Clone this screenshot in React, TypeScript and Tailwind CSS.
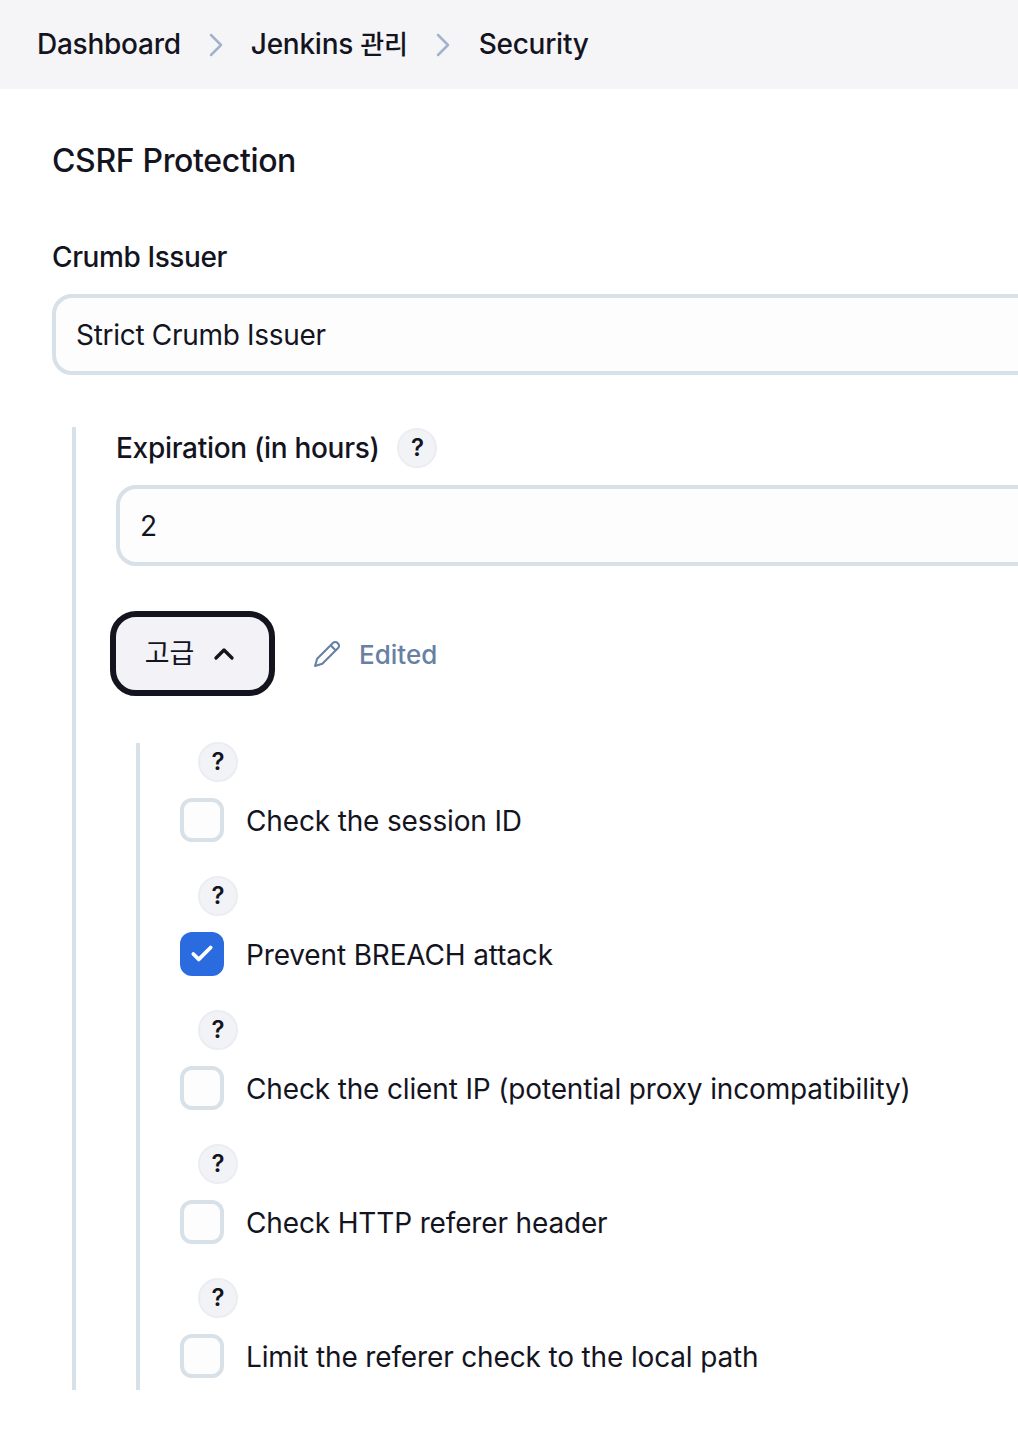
import { Check, ChevronUp } from "lucide-react";

const OPTIONS: { label: string; checked?: boolean }[] = [
  { label: "Check the session ID" },
  { label: "Prevent BREACH attack", checked: true },
  { label: "Check the client IP (potential proxy incompatibility)" },
  { label: "Check HTTP referer header" },
  { label: "Limit the referer check to the local path" },
];

function Separator() {
  return (
    <svg className="mx-7 h-[24px] w-[14px] text-[#a3b2cb]" viewBox="0 0 14 24" fill="none" stroke="currentColor" strokeWidth="2.5" strokeLinecap="round" strokeLinejoin="round">
      <path d="M2 2l10 10L2 22" />
    </svg>
  );
}

function HelpBadge() {
  return (
    <span className="flex h-10 w-10 shrink-0 items-center justify-center rounded-full border-2 border-[#ecedf2] bg-[#f2f3f7] text-[24px] font-semibold leading-none text-[#14141f]">
      ?
    </span>
  );
}

function TextBox({ value }: { value: string }) {
  return (
    <div className="flex h-[81px] w-[1100px] items-center rounded-[20px] border-4 border-[#d8e0e8] bg-[#fdfdfe] pl-5 text-[28px] tracking-[-0.3px]">
      {value}
    </div>
  );
}

function Option({ label, checked }: { label: string; checked?: boolean }) {
  return (
    <div>
      <div className="-mt-px pl-[58px]">
        <HelpBadge />
      </div>
      <div className="mt-[15px] flex items-center gap-[22px] pl-10">
        {checked ? (
          <span className="flex h-11 w-11 items-center justify-center rounded-xl bg-[#2b6be0]">
            <Check className="h-[26px] w-[26px] text-white" strokeWidth={3.5} />
          </span>
        ) : (
          <span className="h-11 w-11 rounded-xl border-4 border-[#d8e0e8] bg-[#fdfdfe]" />
        )}
        <span className="pt-[2px] text-[28px] leading-[44px] tracking-[-0.15px]">{label}</span>
      </div>
    </div>
  );
}

export default function App() {
  return (
    <div className="h-[1430px] w-[1018px] overflow-hidden bg-white font-['Inter','Noto_Sans_CJK_KR',sans-serif] text-[#14141f]">
      <nav className="flex h-[89px] items-center bg-[#f5f5f8] pl-[37px] text-[28px] font-medium tracking-[-0.25px]">
        <span className="pb-[2px]">Dashboard</span>
        <Separator />
        <span className="pb-[2px]">
          Jenkins <span className="text-[26px]">관리</span>
        </span>
        <Separator />
        <span className="pb-[2px] pl-px">Security</span>
      </nav>

      <main className="pl-[52px]">
        <h2 className="mt-[52px] text-[32px] font-medium leading-10 tracking-[-0.35px]">CSRF Protection</h2>
        <label className="mt-[56px] block text-[28px] font-medium leading-10 tracking-[-0.4px]">Crumb Issuer</label>
        <div className="mt-[17px]">
          <TextBox value="Strict Crumb Issuer" />
        </div>

        <section className="ml-5 mt-[52px] border-l-4 border-[#d8e0e8] pl-10">
          <div className="flex items-center gap-[18px] pt-px">
            <span className="text-[28px] font-medium leading-10 tracking-[-0.3px]">Expiration (in hours)</span>
            <HelpBadge />
          </div>
          <div className="mt-[17px]">
            <TextBox value="2" />
          </div>

          <div className="-ml-[6px] mt-[45px] flex items-center gap-[38px]">
            <button className="flex h-[85px] w-[165px] items-center justify-center gap-[14px] rounded-[26px] border-[6px] border-[#14141f] bg-[#f2f2f7] text-[27px]">
              <span className="pt-[2px]">고급</span>
              <ChevronUp className="h-8 w-8" strokeWidth={2.5} />
            </button>
            <span className="flex items-center gap-[17px] text-[26px] font-medium text-[#6780a3]">
              <svg className="h-[29px] w-[29px]" viewBox="0 0 28 28" fill="none" stroke="currentColor" strokeWidth="2" strokeLinejoin="round">
                <path d="M2 26l2-7L19 4c1.500-1.500 3.500-1.500 5 0s1.500 3.500 0 5L9 24z" />
                <path d="M17 6l5 5" />
              </svg>
              <span className="pt-[2px]">Edited</span>
            </span>
          </div>

          <div className="ml-5 mt-[47px] flex flex-col gap-[34px] border-l-4 border-[#d8e0e8] pb-[11px]">
            {OPTIONS.map((option) => (
              <Option key={option.label} label={option.label} checked={option.checked} />
            ))}
          </div>
        </section>
      </main>
    </div>
  );
}
